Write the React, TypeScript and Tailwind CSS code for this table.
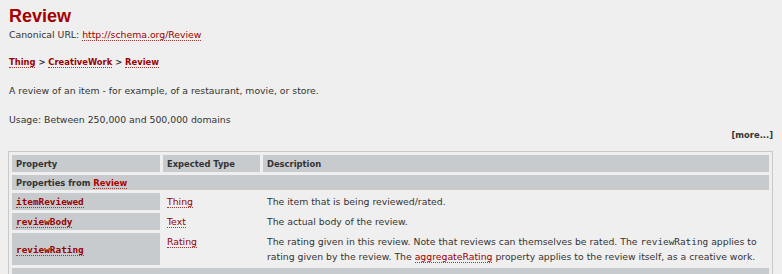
import React from "react";

const sans = "font-['Lucida_Grande','DejaVu_Sans',sans-serif]";
const bold = "font-['DejaVu_Sans_Condensed','DejaVu_Sans',sans-serif] font-bold";
const mono = "font-['DejaVu_Sans_Mono','Liberation_Mono',monospace]";

const Link = ({ children, className = "" }: { children: React.ReactNode; className?: string }) => (
  <a href="#" className={`text-[#990000] border-b border-dotted border-[#a33] ${className}`}>
    {children}
  </a>
);

const rows = [
  { prop: "itemReviewed", type: "Thing", desc: <>The item that is being reviewed/rated.</> },
  { prop: "reviewBody", type: "Text", desc: <>The actual body of the review.</> },
  {
    prop: "reviewRating",
    type: "Rating",
    desc: (
      <>
        The rating given in this review. Note that reviews can themselves be rated. The{" "}
        <code className={`${mono} text-[9.4px] leading-[15px]`}>reviewRating</code> applies to rating given by the
        review. The <Link>aggregateRating</Link> property applies to the review itself, as a creative work.
      </>
    ),
  },
];

export default function App() {
  return (
    <div className={`w-[782px] h-[274px] overflow-hidden bg-[#efefef] text-[#333] ${sans} text-[9.3px] leading-[13px] px-[9px]`}>
      <h1 className="pt-[6px] font-['Liberation_Sans',Arial,sans-serif] font-bold text-[18px] leading-[20px] text-[#a50000]">
        Review
      </h1>
      <p className="mt-[2px]">
        Canonical URL: <Link>http://schema.org/Review</Link>
      </p>
      <p className={`mt-[14px] ${bold}`}>
        <Link>Thing</Link> &gt; <Link>CreativeWork</Link> &gt; <Link>Review</Link>
      </p>
      <p className="mt-[16px]">A review of an item - for example, of a restaurant, movie, or store.</p>
      <p className="mt-[16px]">Usage: Between 250,000 and 500,000 domains</p>
      <div className={`mt-[2px] text-right ${bold}`}>[more...]</div>

      <table className="mt-[10px] -ml-px w-[765px] border border-[#c9c9c9] border-separate border-spacing-[3px] leading-[15px] text-left">
        <thead>
          <tr className={bold}>
            <th className="w-[148px] bg-[#c8cbce] px-[4px] py-px">Property</th>
            <th className="w-[97px] bg-[#c8cbce] px-[4px] py-px">Expected Type</th>
            <th className="bg-[#c8cbce] px-[4px] py-px">Description</th>
          </tr>
        </thead>
        <tbody>
          <tr>
            <th colSpan={3} className={`bg-[#c8cbce] px-[4px] py-0 ${bold}`}>
              Properties from <Link className="text-[#b00000]">Review</Link>
            </th>
          </tr>
          {rows.map((r) => (
            <tr key={r.prop}>
              <th className="bg-[#c8cbce] px-[4px] py-px align-middle text-left">
                <Link className={`${mono} text-[9.4px] font-bold`}>{r.prop}</Link>
              </th>
              <td className="px-[4px] py-px align-top">
                <Link>{r.type}</Link>
              </td>
              <td className="px-[4px] py-px align-top">{r.desc}</td>
            </tr>
          ))}
          <tr>
            <th colSpan={3} className="bg-[#c8cbce] h-[17px]"></th>
          </tr>
        </tbody>
      </table>
    </div>
  );
}
